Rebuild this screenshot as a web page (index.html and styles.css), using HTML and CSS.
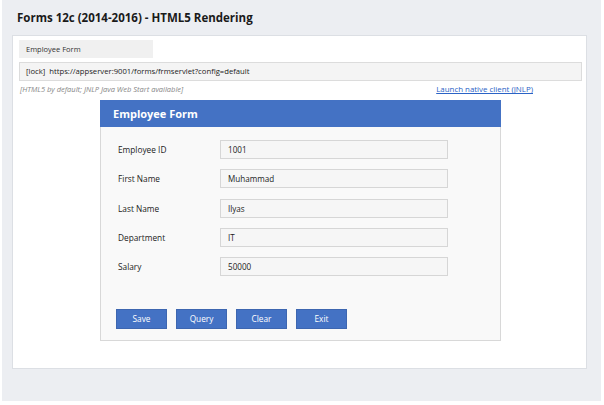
FILE: index.html
```html
<!DOCTYPE html>
<html>
<head>
<meta charset="utf-8">
<link rel="stylesheet" href="styles.css">
</head>
<body>
<div class="page">
  <h1 class="title">Forms 12c (2014-2016) - HTML5 Rendering</h1>
  <div class="panel">
    <div class="tab">Employee Form</div>
    <div class="urlbar">[lock]&nbsp; https://appserver:9001/forms/frmservlet?config=default</div>
    <div class="noterow">
      <span class="note">[HTML5 by default; JNLP Java Web Start available]</span>
      <a class="link" href="#">Launch native client (JNLP)</a>
    </div>
    <div class="formwin">
      <div class="formhead">Employee Form</div>
      <div class="formbody">
        <div class="row"><span class="label">Employee ID</span><span class="input">1001</span></div>
        <div class="row"><span class="label">First Name</span><span class="input">Muhammad</span></div>
        <div class="row"><span class="label">Last Name</span><span class="input">Ilyas</span></div>
        <div class="row"><span class="label">Department</span><span class="input">IT</span></div>
        <div class="row"><span class="label">Salary</span><span class="input">50000</span></div>
        <div class="buttons">
          <span class="btn">Save</span>
          <span class="btn">Query</span>
          <span class="btn">Clear</span>
          <span class="btn">Exit</span>
        </div>
      </div>
    </div>
  </div>
</div>
</body>
</html>
```

FILE: styles.css
```css
html, body {
  margin: 0;
  padding: 0;
  background: #ffffff;
}
body {
  font-family: "Open Sans", "Noto Sans", sans-serif;
  color: #222;
}
.page {
  margin-left: 2px;
  width: 599px;
  height: 401px;
  background: #eceef2;
  padding-top: 1px;
  box-sizing: border-box;
}
.title {
  margin: 9px 0 0 15px;
  font-size: 11.5px;
  font-weight: 700;
  line-height: 16px;
  height: 16px;
  color: #1a1a1a;
}
.panel {
  margin: 9px 0 0 10px;
  width: 575px;
  height: 334px;
  box-sizing: border-box;
  background: #ffffff;
  border: 1px solid #dcdfe4;
  padding: 4px 0 0 6px;
}
.tab {
  width: 134px;
  height: 18px;
  background: #f0f0f0;
  font-size: 7.5px;
  line-height: 18px;
  padding-left: 7px;
  box-sizing: border-box;
  color: #333;
}
.urlbar {
  margin-top: 4px;
  width: 563px;
  height: 19px;
  box-sizing: border-box;
  background: #f4f4f4;
  border: 1px solid #dcdcdc;
  font-size: 7.7px;
  line-height: 17px;
  padding-left: 6px;
  color: #222;
}
.noterow {
  display: flex;
  justify-content: space-between;
  width: 513px;
  height: 16px;
  line-height: 16px;
  font-size: 7.5px;
  padding-left: 1px;
}
.note {
  font-style: italic;
  color: #888;
}
.link {
  color: #2a63c6;
  font-size: 7.9px;
  text-decoration: underline;
}
.formwin {
  margin: 3px 0 0 81px;
  width: 401px;
  height: 241px;
  box-sizing: border-box;
  border: 1px solid #d8d8d8;
  background: #f9f9f9;
}
.formhead {
  margin: -1px -1px 0 -1px;
  height: 27px;
  background: #4472c4;
  color: #fff;
  font-weight: 700;
  font-size: 11px;
  line-height: 27px;
  padding-left: 13px;
}
.formbody {
  padding: 13px 0 0 17px;
}
.row {
  display: flex;
  align-items: center;
  height: 19px;
  margin-bottom: 10.3px;
}
.label {
  width: 102px;
  font-size: 8.3px;
  color: #222;
}
.input {
  width: 228px;
  height: 19px;
  box-sizing: border-box;
  background: #f6f6f6;
  border: 1px solid #d6d6d6;
  font-size: 8.1px;
  line-height: 17px;
  padding-left: 7px;
  color: #222;
}
.buttons {
  display: flex;
  gap: 9px;
  margin-top: 33px;
  margin-left: -2px;
}
.btn {
  width: 51px;
  height: 20px;
  box-sizing: border-box;
  background: #4472c4;
  border: 1px solid #3d66b0;
  color: #fff;
  font-size: 8.3px;
  line-height: 18px;
  text-align: center;
}
```
